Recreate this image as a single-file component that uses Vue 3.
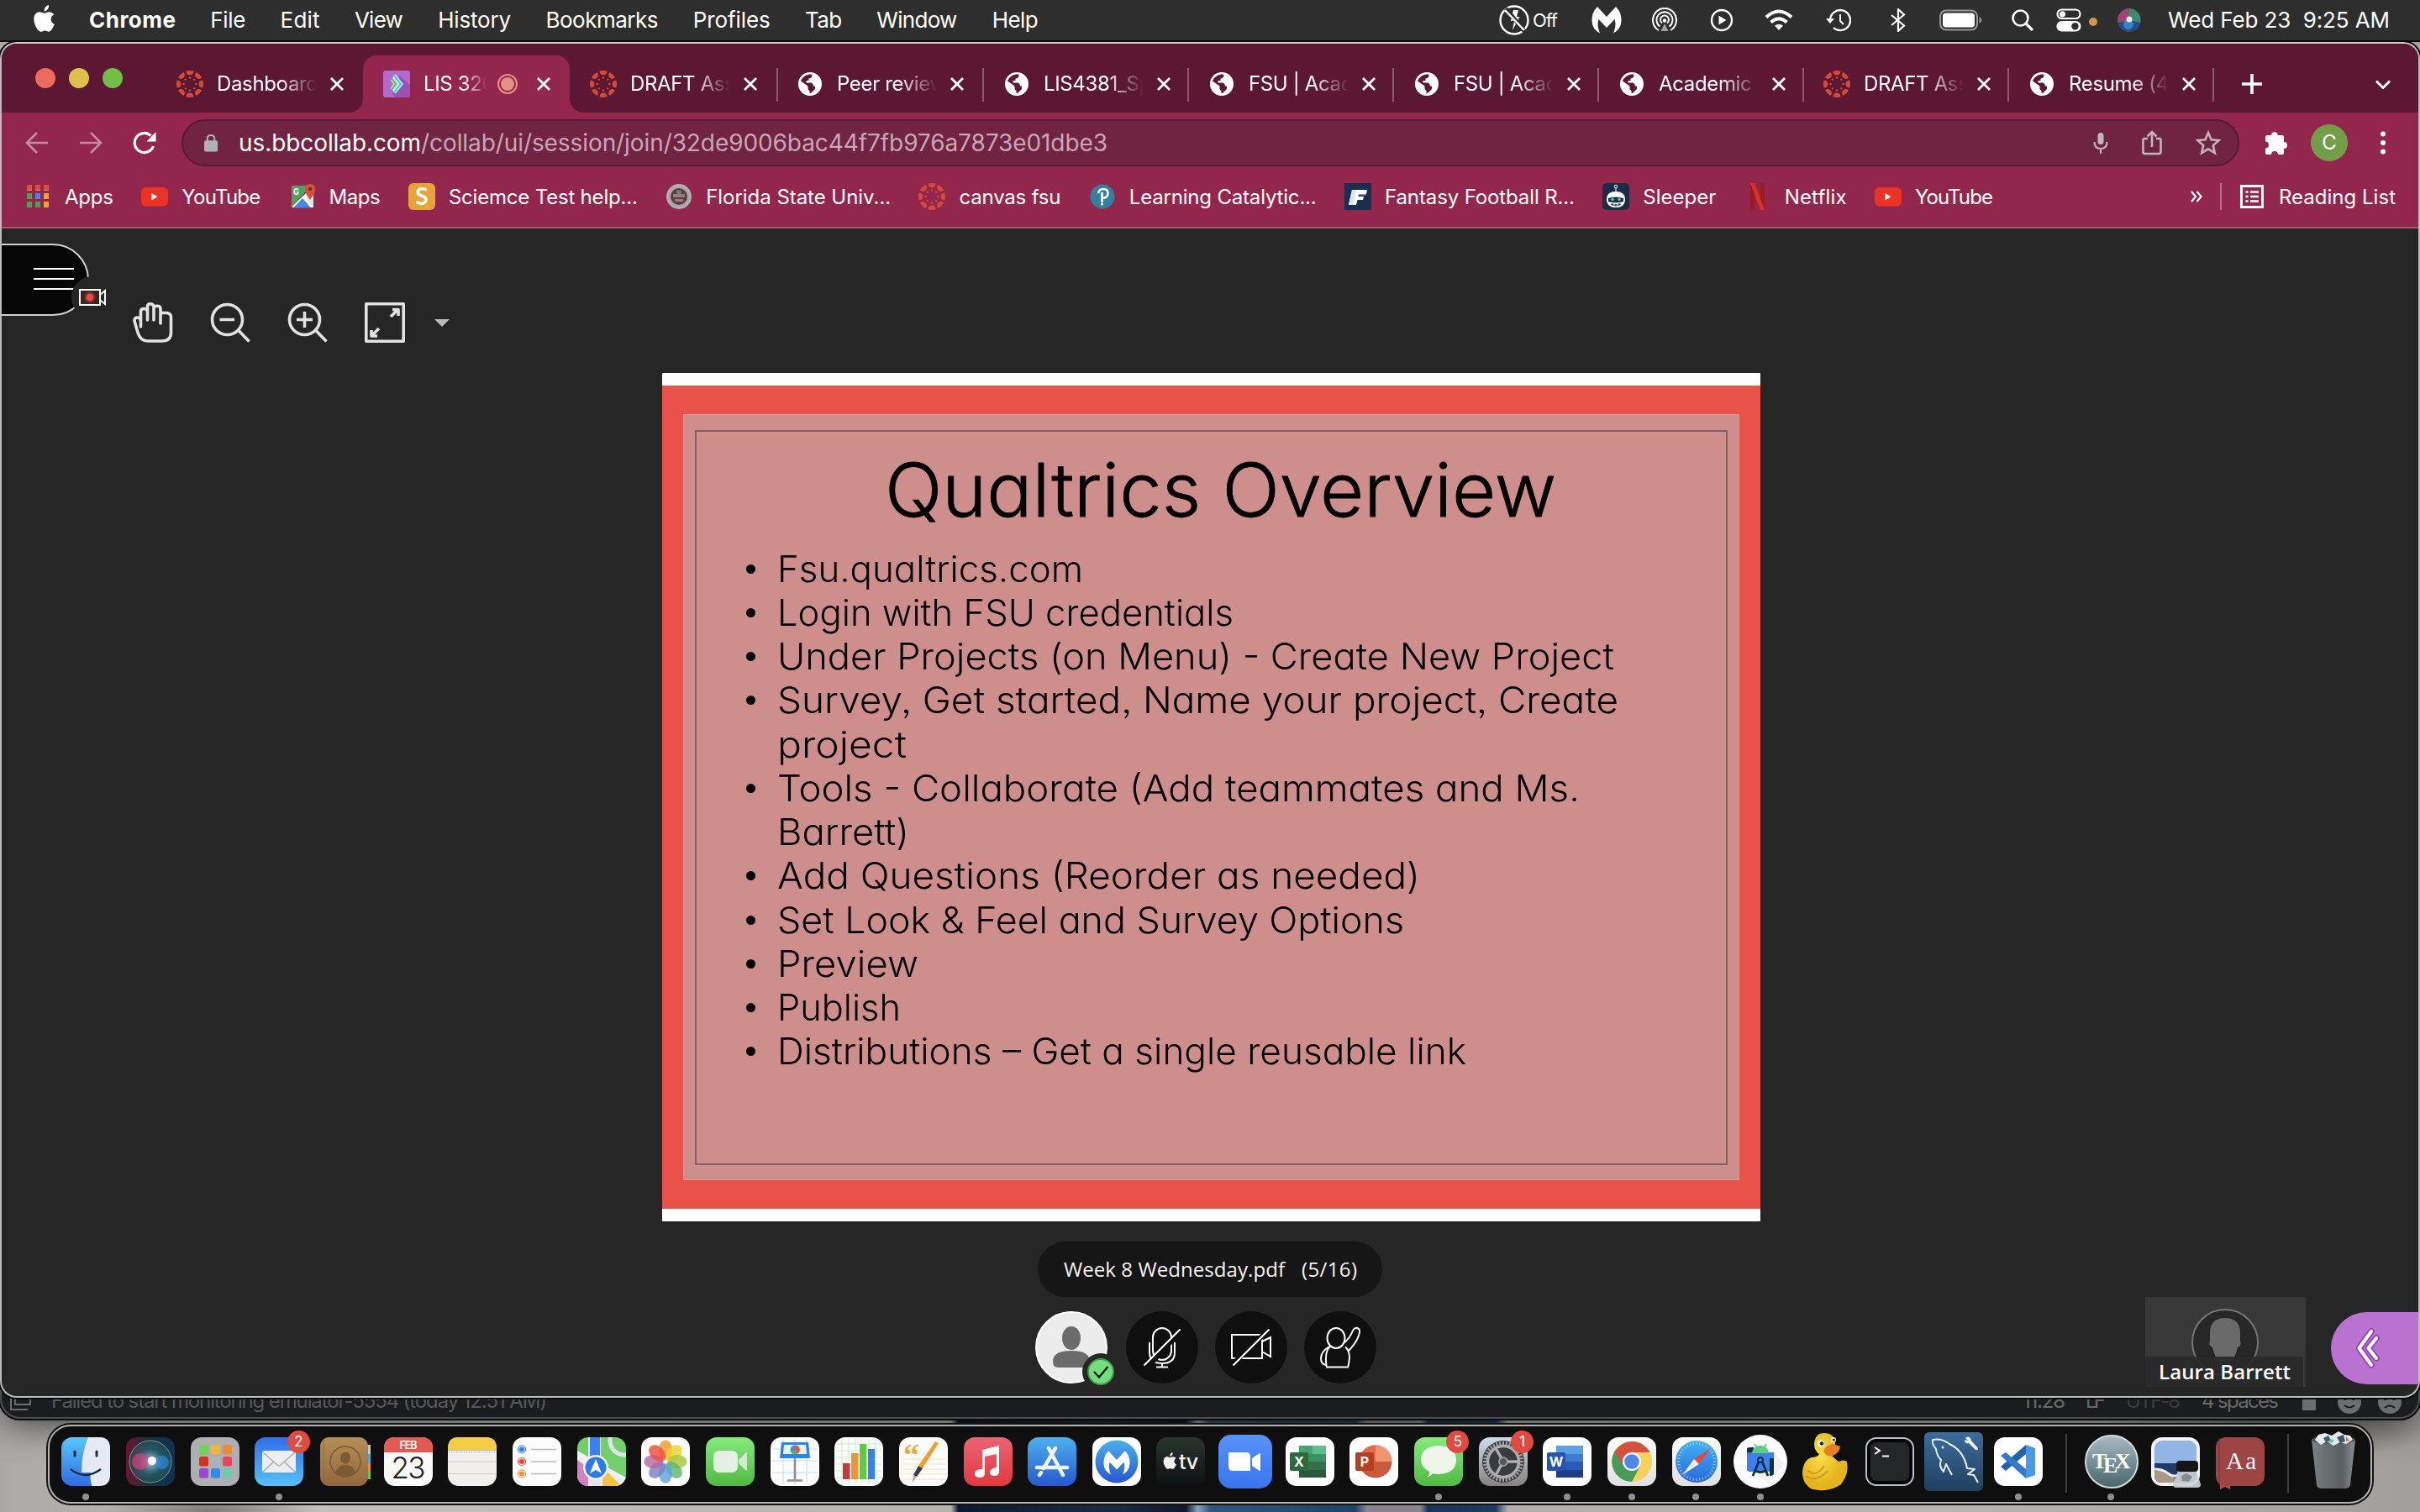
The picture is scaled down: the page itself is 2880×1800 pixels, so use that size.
<script setup>
// Spreads the letters of an element so that its text takes the given width;
// with .stretch the glyphs themselves are widened instead.
const vFit = {
  mounted(el, { value, modifiers }) {
    const count = el.textContent.length
    const natural = el.getBoundingClientRect().width
    if (modifiers.stretch) {
      el.style.transform = `scaleX(${value / natural})`
      return
    }
    const spacing = (value - natural) / Math.max(1, count - 1)
    el.style.letterSpacing = spacing + 'px'
    el.style.marginRight = -spacing + 'px'
  }
}

const menus = [
  ['File', 42], ['Edit', 47], ['View', 58], ['History', 87], ['Bookmarks', 134],
  ['Profiles', 92], ['Tab', 44], ['Window', 96], ['Help', 55]
]

const tabs = [
  { icon: 'canvas', title: 'Dashboard' },
  { icon: 'collab', title: 'LIS 3201', active: true },
  { icon: 'canvas', title: 'DRAFT Assign' },
  { icon: 'globe', title: 'Peer review', line: true, before: true },
  { icon: 'globe', title: 'LIS4381_Sp', line: true },
  { icon: 'globe', title: 'FSU | Acade', line: true },
  { icon: 'globe', title: 'FSU | Acade', line: true },
  { icon: 'globe', title: 'Academic C', line: true },
  { icon: 'canvas', title: 'DRAFT Assign', line: true },
  { icon: 'globe', title: 'Resume (4)', line: true }
]

const bookmarks = [
  ['apps', 'Apps', 58], ['youtube', 'YouTube', 94], ['gmaps', 'Maps', 61],
  ['sci', 'Sciemce Test help...', 225], ['seal', 'Florida State Univ...', 220],
  ['canvas', 'canvas fsu', 121], ['pearson', 'Learning Catalytic...', 223],
  ['ff', 'Fantasy Football R...', 226], ['sleeper', 'Sleeper', 87],
  ['netflix', 'Netflix', 74], ['youtube', 'YouTube', 93]
]

const points = [
  [['Fsu.qualtrics.com', 364]],
  [['Login with FSU credentials', 543]],
  [['Under Projects (on Menu) - Create New Project', 996]],
  [['Survey, Get started, Name your project, Create', 1001], ['project', 154]],
  [['Tools - Collaborate (Add teammates and Ms.', 955], ['Barrett)', 157]],
  [['Add Questions (Reorder as needed)', 765]],
  [['Set Look & Feel and Survey Options', 746]],
  [['Preview', 168]],
  [['Publish', 147]],
  [['Distributions – Get a single reusable link', 820]]
]

const spokes = [0, 45, 90, 135, 180, 225, 270, 315]
const petals = ['#f09a2c', '#ecd32f', '#a8c83e', '#62b56a', '#5ba7dd', '#7d7fc4', '#b767a5', '#e8513f']
const launch = ['#6fd84f', '#f3b52f', '#ee8b32', '#d8301f', '#a9b3b8', '#ea4659', '#9a45d6', '#2b8df0', '#66cfae']
const teeth = Array.from({ length: 36 }, (_, i) => i * 10)
</script>

<template>
  <div class="screen">
    <svg class="defs" width="0" height="0">
      <defs>
        <linearGradient id="gBlue" x2="0" y2="1"><stop stop-color="#2f6fea" /><stop offset="1" stop-color="#57c1f8" /></linearGradient>
        <linearGradient id="gFinder" x2="0" y2="1"><stop stop-color="#59c6f8" /><stop offset="1" stop-color="#2e6ce6" /></linearGradient>
        <linearGradient id="gGreen" x2="0" y2="1"><stop stop-color="#84ea7a" /><stop offset="1" stop-color="#52b944" /></linearGradient>
        <linearGradient id="gStore" x2="0" y2="1"><stop stop-color="#4db0ec" /><stop offset="1" stop-color="#2558d2" /></linearGradient>
        <linearGradient id="gMusic" x2="0" y2="1"><stop stop-color="#ea6475" /><stop offset="1" stop-color="#e5373c" /></linearGradient>
        <linearGradient id="gWhite" x2="0" y2="1"><stop stop-color="#ffffff" /><stop offset="1" stop-color="#dfe0e2" /></linearGradient>
        <linearGradient id="gZoom" x2="0" y2="1"><stop stop-color="#5794f8" /><stop offset="1" stop-color="#3a74ef" /></linearGradient>
        <linearGradient id="gTv" x2="0" y2="1"><stop stop-color="#29352f" /><stop offset="1" stop-color="#0d1113" /></linearGradient>
        <linearGradient id="gBrown" x2="0" y2="1"><stop stop-color="#b38f56" /><stop offset="1" stop-color="#93673f" /></linearGradient>
        <linearGradient id="gTex" x2="0" y2="1"><stop stop-color="#a8bcc2" /><stop offset="1" stop-color="#48656a" /></linearGradient>
        <linearGradient id="gSql" x2="0" y2="1"><stop stop-color="#3c6c9c" /><stop offset="1" stop-color="#20405e" /></linearGradient>
        <linearGradient id="gGear" x2="0" y2="1"><stop stop-color="#cfdde5" /><stop offset="1" stop-color="#85827f" /></linearGradient>
        <linearGradient id="gCan"><stop stop-color="#7b8184" /><stop offset=".3" stop-color="#6a6f72" /><stop offset=".7" stop-color="#5a5f62" /><stop offset="1" stop-color="#8a9093" /></linearGradient>
        <linearGradient id="gSafari" x2="0" y2="1"><stop stop-color="#3fb4f2" /><stop offset="1" stop-color="#2a67dc" /></linearGradient>
        <linearGradient id="gSiriBg"><stop stop-color="#6d1232" /><stop offset=".5" stop-color="#16343a" /><stop offset="1" stop-color="#112f55" /></linearGradient>
        <radialGradient id="gSiri"><stop stop-color="#ffffff" /><stop offset=".2" stop-color="#7ba3b8" /><stop offset=".6" stop-color="#2d6f80" stop-opacity=".6" /><stop offset="1" stop-color="#2f5a58" stop-opacity=".5" /></radialGradient>
        <radialGradient id="gDuck" cx=".4" cy=".4"><stop stop-color="#fbe04a" /><stop offset="1" stop-color="#e5b420" /></radialGradient>
        <symbol id="canvas" viewBox="0 0 32 32">
          <g fill="#d64b36">
            <g v-for="a in spokes" :key="a" :transform="`rotate(${a} 16 16)`">
              <path d="M11.4.8Q16-.8 20.6.8Q20 5.4 16 5.4T11.4.8Z" /><circle cx="16" cy="8.6" r="1.2" />
            </g>
          </g>
        </symbol>
        <symbol id="globe" viewBox="0 0 32 32">
          <circle cx="16" cy="16" r="14" fill="#fff" />
          <path fill="#5c1832" d="M15 4.500h3.500q.4 3-1.500 4.500l-2.500.5v2.500h-3v2.500h6q2.500 1 2.500 4h2v3.500l-3.500 3.500q-1.500 1.500-3 1.500v-3q-2-.5-2-3v-2.500L5 12.500Q7.500 6 15 4.500Z" />
        </symbol>
        <symbol id="collab" viewBox="0 0 32 32">
          <rect width="32" height="32" rx="3" fill="#b36bcb" /><path d="M20 6l12 11v12q0 3-3 3H14l-4-5Z" fill="#9a52b5" />
          <path d="M13 6l8 10L13 26" fill="none" stroke="#fff" stroke-width="4.500" /><path d="M13 6l8 10L13 26" fill="none" stroke="#3bd3f0" stroke-width="2.600" /><path d="M10.500 10l4.500 6-4.500 6.500" fill="none" stroke="#fff" stroke-width="4" /><path d="M10.500 10l4.500 6-4.500 6.500" fill="none" stroke="#58c93c" stroke-width="2.400" />
        </symbol>
        <symbol id="youtube" viewBox="0 0 32 32"><rect y="5" width="32" height="22.500" rx="5.500" fill="#ea3323" /><path d="M12.500 12l7 4.200-7 4.200Z" fill="#fff" /></symbol>
        <symbol id="apps" viewBox="0 0 32 32">
          <g transform="translate(3 2)"><path fill="#e44b3a" d="M0 0h6v6H0zM10 0h6v6h-6zM20 0h6v6h-6z" /><path fill="#b9909c" d="M0 6h6v1H0zM10 6h6v1h-6zM20 6h6v1h-6z" /><path fill="#4ea04e" d="M0 10h6v7H0zM0 20h6v7H0zM10 20h6v7h-6z" /><path fill="#4087f0" d="M10 10h6v7h-6z" /><path fill="#e8a534" d="M20 10h6v7h-6zM20 20h6v7h-6z" /></g>
        </symbol>
        <symbol id="gmaps" viewBox="0 0 32 32">
          <path fill="#4fa35c" d="M5 3h16l-2 8L3 28V5q0-2 2-2Z" /><path fill="#f2c14a" d="M3 28l14-13 5 2L10 29Z" /><path fill="#fff" d="M3 29L21 11l8 10v8Z" /><path fill="#dfe2e6" d="M20 9h9v20l-8-10Z" /><path fill="#4285f4" d="M5 29.500L16 18l10 11.500Z" /><path fill="#d6523f" d="M25 1q6 0 6 6 0 5-3.500 9L25 20l-2.500-4Q19 12 19 7q0-6 6-6Z" /><circle cx="25" cy="7" r="2.300" fill="#7c2b22" /><text x="5" y="14" font-size="10" font-weight="700" fill="#fff" font-family="Roboto,sans-serif">G</text>
        </symbol>
        <symbol id="sci" viewBox="0 0 32 32"><rect width="32" height="32" rx="6" fill="#e8a33a" /><text x="16" y="26" text-anchor="middle" font-size="28" font-weight="700" fill="#fff" font-family="Lato,sans-serif">S</text></symbol>
        <symbol id="seal" viewBox="0 0 32 32"><circle cx="16" cy="16" r="15" fill="#a9a9a9" /><circle cx="16" cy="16" r="13.500" fill="none" stroke="#c9c9c9" stroke-width="1" stroke-dasharray="2 2" /><circle cx="16" cy="16" r="10" fill="#5f3b3f" /><path d="M9 13h14v4H9zM11 19h10v3H11z" fill="#8f817c" /><circle cx="16" cy="11" r="3" fill="#75806c" /></symbol>
        <symbol id="pearson" viewBox="0 0 32 32"><circle cx="16" cy="16" r="14.500" fill="#357f9e" /><path d="M11 12q1-5 6-5 5.500 0 5.500 5t-6 6M15.500 11v12" fill="none" stroke="#fff" stroke-width="2.600" /><circle cx="15.500" cy="25" r="1.500" fill="#fff" /></symbol>
        <symbol id="ff" viewBox="0 0 32 32"><rect width="32" height="32" fill="#192f50" /><path d="M9 8h18l-1 5h-9l-.6 3H23l-1 4h-6.500L14 26H5Z" fill="#fff" /><path d="M9 8h5L10 26H5Z" fill="#dfe2e6" /><path d="M17 13h9l-.5 1.500H17Z" fill="#8793a5" /></symbol>
        <symbol id="sleeper" viewBox="0 0 32 32"><rect width="32" height="32" rx="5" fill="#1c2c45" /><path d="M5 19q0-9 11-9t11 9q0 10-11 10T5 19Z" fill="#fff" /><path d="M7 18q9-3 18 0v4q-9 2.500-18 0Z" fill="#1c2c45" /><circle cx="12" cy="19.500" r="1.700" fill="#3fd5b4" /><circle cx="20" cy="19.500" r="1.700" fill="#3fd5b4" /><path d="M10 25q6 2.500 12 0M12 24v3M16 24.500v3M20 24v3" stroke="#1c2c45" stroke-width="1.200" fill="none" /><path d="M16 10V6" stroke="#fff" /><circle cx="16" cy="4" r="1.800" fill="none" stroke="#fff" /></symbol>
        <symbol id="netflix" viewBox="0 0 32 32"><path fill="#9c1c1c" d="M7 0h5v32H7zM19 0h5v32h-5z" /><path fill="#de3025" d="M7 0h5l12 32h-5z" /></symbol>
        <symbol id="apple" viewBox="0 0 26 32"><path d="M18 0q.5 3-1.300 5.300Q15 7.500 12.700 7.400 12.300 4.600 14 2.500 15.700.4 18 0ZM23.500 25.500Q21 31.500 18.300 31.700 17 31.700 15.600 31 14.200 30.500 13 30.600 12 30.600 10.700 31.200 9.400 31.800 8.500 31.800 5.500 31.500 2.500 25.500 0 20.500.3 16 .7 11 4 9 6.500 7.500 9.500 8.700 12 9.700 13 9.600 14 9.500 16 8.700 21 7 24.300 11.300 20.500 13.500 20.700 17.300 20.900 21.300 25 23Z" /></symbol>
        <symbol id="mwb" viewBox="0 0 36 32"><path d="M7 0L18 12 29 0Q36 7 35.500 17 35 27 26 31.500 30 22 27.500 15L18 25 8.500 15Q6 22 10 31.500 1 27 .5 17 0 7 7 0Z" /></symbol>
      </defs>
    </svg>

    <header class="menubar">
      <svg class="apple" fill="#fff"><use href="#apple" /></svg>
      <nav class="menus">
        <span v-fit="103" class="bold">Chrome</span>
        <span v-for="m in menus" :key="m[0]" v-fit="m[1]">{{ m[0] }}</span>
      </nav>
      <div class="status">
        <svg width="36" height="36" viewBox="0 0 36 36"><circle cx="18" cy="18" r="16.500" fill="none" stroke="#fff" stroke-width="2.400" /><path d="M17 6h6l-2 8h3.500L16 30l2-11h-4Z" fill="#fff" /><path d="M8 4l23 28" stroke="#2e2e2e" stroke-width="5" /><path d="M7 6l23 24" stroke="#fff" stroke-width="2.400" /></svg>
        <span v-fit="30" class="off">Off</span>
        <svg width="36" height="32" fill="#fff"><use href="#mwb" /></svg>
        <svg width="30" height="30" viewBox="0 0 30 30" fill="none" stroke="#fff" stroke-width="2"><path d="M8 27A14 14 0 1 1 22 27M9.500 22.500A9.500 9.500 0 1 1 20.500 22.500M12 18.500A5 5 0 1 1 18 18.500" /><circle cx="15" cy="15.500" r="2.200" fill="#fff" stroke="none" /><path d="M15 19L10.500 28h9Z" fill="#fff" stroke="none" opacity=".55" /></svg>
        <svg width="28" height="28" viewBox="0 0 28 28"><circle cx="14" cy="14" r="12" fill="none" stroke="#fff" stroke-width="2.400" /><path d="M10.500 8.500l9 5.500-9 5.500Z" fill="#fff" /></svg>
        <svg width="34" height="26" viewBox="0 0 34 26" fill="none" stroke="#fff" stroke-width="4"><path d="M2 9.500Q17-4.500 32 9.500M7.500 15.500Q17 7 26.500 15.500" /><path d="M17 25l-5-5.500q5-3.500 10 0Z" fill="#fff" stroke="none" /></svg>
        <svg width="30" height="28" viewBox="0 0 30 28" fill="none" stroke="#fff" stroke-width="2.300"><path d="M5 14A12 12 0 1 1 9 23" /><path d="M17 7v8l4 4" stroke-width="2" /><path d="M0 12h10L5 18Z" fill="#fff" stroke="none" /></svg>
        <svg width="20" height="28" viewBox="0 0 20 28" fill="none" stroke="#fff" stroke-width="2.200"><path d="M2 8l15 12.500L10 27V1l7 6.500L2 20" /></svg>
        <svg width="52" height="26" viewBox="0 0 52 26"><rect x="1" y="1.500" width="44" height="23" rx="7" fill="none" stroke="#969696" stroke-width="2" /><rect x="4" y="4.500" width="38" height="17" rx="4" fill="#fff" /><path d="M47.500 9q3 1.500 3 4t-3 4Z" fill="#969696" /></svg>
        <svg width="26" height="26" viewBox="0 0 26 26" fill="none" stroke="#fff" stroke-width="2.600"><circle cx="10.500" cy="10.500" r="9" /><path d="M17 17l8 8" stroke-width="3.200" /></svg>
        <svg width="30" height="28" viewBox="0 0 30 28"><rect x="1.500" y="1.500" width="27" height="10.500" rx="5.200" fill="none" stroke="#fff" stroke-width="2.200" /><circle cx="7.500" cy="6.800" r="3.600" fill="#fff" /><rect x=".5" y="15" width="29" height="12.500" rx="6.200" fill="#fff" /><circle cx="22.500" cy="21.200" r="4.200" fill="#2e2e2e" /></svg>
        <i class="mic-dot"></i>
        <svg width="30" height="30" viewBox="0 0 30 30"><circle cx="15" cy="15" r="14" fill="#274c8a" /><path d="M15 1a14 14 0 0 1 13 17L15 15Z" fill="#3d8a6d" /><path d="M1.500 18A14 14 0 0 1 15 1v14Z" fill="#a2446d" /><circle cx="14" cy="20" r="6" fill="#3aa0dc" opacity=".7" /><circle cx="15" cy="14" r="3.500" fill="#fff" opacity=".85" /></svg>
        <span class="clock"><span v-fit="264">Wed Feb 23&nbsp; 9:25 AM</span></span>
      </div>
    </header>

    <div class="ide">
      <svg class="ide-icon" width="26" height="26" viewBox="0 0 26 26" fill="none" stroke="#6a6c6e" stroke-width="2"><path d="M6 0v18h18V0M1 4v20h20" /></svg>
      <span v-fit="590" class="ide-msg">Failed to start monitoring emulator-5554 (today 12:51 AM)</span>
      <span v-fit="51">11:28</span>
      <span v-fit="24" class="lf">LF</span>
      <span v-fit="65" class="utf">UTF-8</span>
      <span v-fit="92" class="spaces">4 spaces</span>
      <i class="lock-box"></i>
      <svg class="face" viewBox="0 0 28 28"><circle cx="14" cy="14" r="14" fill="#6b6d6e" /><path d="M8 18q6 5 12 0" fill="none" stroke="#1b1c1e" stroke-width="2" /><path d="M9 7v5M19 7v5" stroke="#1b1c1e" stroke-width="3" /></svg>
      <svg class="face" viewBox="0 0 28 28"><circle cx="14" cy="14" r="14" fill="#6b6d6e" /><path d="M8 21q6-5 12 0" fill="none" stroke="#1b1c1e" stroke-width="2" /><path d="M9 7v5M19 7v5" stroke="#1b1c1e" stroke-width="3" /></svg>
    </div>

    <main class="window">
      <div class="tabstrip">
        <div class="lights"><i class="red"></i><i class="yellow"></i><i class="green"></i></div>
        <div class="tabs">
          <div v-for="(t, i) in tabs" :key="i" class="tab" :class="{ active: t.active, line: t.line, before: t.before, wide: i < 4 }">
            <svg class="fav"><use :href="'#' + t.icon" /></svg>
            <span class="title">{{ t.title }}</span>
            <i v-if="t.active" class="rec"></i>
            <svg class="close" viewBox="0 0 16 16"><path d="M1 1l14 14M15 1L1 15" stroke="#fff" stroke-width="2.800" /></svg>
          </div>
        </div>
        <svg class="plus" viewBox="0 0 24 24"><path d="M12 0v24M0 12h24" stroke="#fff" stroke-width="3.600" /></svg>
        <svg class="chev" viewBox="0 0 18 12"><path d="M1 1.500l8 8 8-8" fill="none" stroke="#fff" stroke-width="2.800" /></svg>
      </div>

      <div class="toolbar">
        <svg class="nav" viewBox="0 0 28 28" fill="none" stroke="#c68ba3" stroke-width="2.600"><path d="M27 14H2M14 2L2 14l12 12" /></svg>
        <svg class="nav" viewBox="0 0 28 28" fill="none" stroke="#c68ba3" stroke-width="2.600"><path d="M1 14h25M14 2l12 12-12 12" /></svg>
        <svg class="nav" viewBox="0 0 28 28" fill="none" stroke="#fff" stroke-width="3.200"><path d="M24.500 18A11.500 11.500 0 1 1 21.500 5.500" /><path d="M27.500 1v11.500H16.500Z" fill="#fff" stroke="none" /></svg>
        <div class="omnibox">
          <svg class="lock" viewBox="0 0 18 22"><rect y="8" width="17" height="14" rx="2" fill="#b1b1b8" /><path d="M4 9V6q0-4.500 4.500-4.500T13 6v3" fill="none" stroke="#b1b1b8" stroke-width="2.200" /></svg>
          <span v-fit="1034" class="url"><b>us.bbcollab.com</b>/collab/ui/session/join/32de9006bac44f7fb976a7873e01dbe3</span>
          <svg width="18" height="27" viewBox="0 0 18 27" fill="none" stroke="#c0b6b9" stroke-width="2.200"><rect x="5.500" y="1" width="7" height="14" rx="3.500" fill="#c0b6b9" stroke="none" /><path d="M1.500 12q0 8 7.500 8t7.500-8M9 20v6" /></svg>
          <svg width="24" height="30" viewBox="0 0 24 30" fill="none" stroke="#c0b6b9" stroke-width="2.600"><path d="M7 10H3Q1.500 10 1.500 12v14q0 2 2 2h17q2 0 2-2V12q0-2-1.500-2h-4M12 20V2M6.500 7.500L12 2l5.500 5.500" /></svg>
          <svg width="30" height="30" viewBox="0 0 30 30" fill="none" stroke="#c0b6b9" stroke-width="2.600"><path d="M15 3l3.600 8.300 9 .8-6.800 6 2 8.900-7.800-4.700L7.200 27l2-8.900-6.800-6 9-.8Z" /></svg>
        </div>
        <svg class="puzzle" viewBox="0 0 28 28" fill="#fff"><path d="M8 5a3.800 3.800 0 0 1 7.600 0H21q2 0 2 2v6a3.800 3.800 0 0 1 0 8v5q0 2-2 2h-5a4 4 0 0 0-8 0H3q-2 0-2-2v-5.500a4 4 0 0 0 0-8V7q0-2 2-2Z" /></svg>
        <span class="avatar">C</span>
        <svg class="dots" viewBox="0 0 6 28" fill="#fff"><circle cx="3" cy="3.500" r="3" /><circle cx="3" cy="14" r="3" /><circle cx="3" cy="24.500" r="3" /></svg>
      </div>

      <div class="bookmarks">
        <div v-for="(b, i) in bookmarks" :key="i" class="bm">
          <svg class="fav"><use :href="'#' + b[0]" /></svg>
          <span v-fit="b[2]">{{ b[1] }}</span>
        </div>
        <svg class="more" viewBox="0 0 14 14" fill="none" stroke="#fff" stroke-width="2.200"><path d="M1 1l5 6-5 6M7.500 1l5 6-5 6" /></svg>
        <i class="bm-line"></i>
        <svg class="reading" viewBox="0 0 28 28"><rect x="1.500" y="1.500" width="25" height="25" fill="none" stroke="#fff" stroke-width="3" /><path d="M6.500 8.500h3M6.500 14h3M6.500 19.500h3M12 8.500h10M12 14h10M12 19.500h10" stroke="#fff" stroke-width="2.600" /></svg>
        <span v-fit="139">Reading List</span>
      </div>

      <section class="session">
        <div class="session-menu"><i></i><i></i><i></i></div>
        <div class="recording">
          <svg width="32" height="20" viewBox="0 0 32 20"><rect x="1" y="1" width="24" height="18" fill="#3a2523" stroke="#fff" stroke-width="2" /><circle cx="13" cy="10" r="6.500" fill="#b53a31" opacity=".6" /><circle cx="13" cy="10" r="4.200" fill="#ee4f42" /><path d="M25 7l6-5v16l-6-5" fill="none" stroke="#fff" stroke-width="2" /></svg>
        </div>

        <div class="tools">
          <svg viewBox="0 0 48 48"><path d="M9.500 29V11q0-3.500 3.800-3.500T17.500 11v10V5q0-3.200 3.500-3.200T25 5v16V7.500q0-3.200 4-3.200t4 3.200V25V15.500q0-3 2-3h6q4.500 1 4.500 5V36q0 10-11 10H18Q9 46 6 36L2 22q0-4 3.500-4T9.500 22Z" /></svg>
          <svg viewBox="0 0 48 48"><circle cx="20.500" cy="20.500" r="18" /><path d="M34 33.500L46.500 46.500M11.500 20.500h17.500" /></svg>
          <svg viewBox="0 0 48 48"><circle cx="20.500" cy="20.500" r="18" /><path d="M34 33.500L46.500 46.500M11 20.500h19M20.500 11v19" /></svg>
          <svg viewBox="0 0 48 48"><rect x="1.800" y="1.800" width="44.400" height="44.400" /><path d="M31 17l9-9M33 8.500h7V16M17 31l-9 9M8 33v7h7" /></svg>
          <i class="caret"></i>
        </div>

        <article class="slide">
          <div class="frame">
            <div class="paper">
              <h1><span v-fit.stretch="799">Qualtrics Overview</span></h1>
              <ul>
                <li v-for="(p, i) in points" :key="i">
                  <div v-for="l in p" :key="l[0]" class="row"><span v-fit.stretch="l[1]">{{ l[0] }}</span></div>
                </li>
              </ul>
            </div>
          </div>
        </article>

        <div class="pill"><span v-fit="263">Week 8 Wednesday.pdf</span><span v-fit="66">(5/16)</span></div>

        <div class="controls">
          <div class="me">
            <svg viewBox="0 0 86 86"><circle cx="43" cy="43" r="42" fill="#ececec" stroke="#fff" stroke-width="2" /><ellipse cx="43" cy="32" rx="11" ry="14" fill="#6b6b6b" /><path d="M21 60q0-13 22-13t22 13q0 7-6 7H27q-6 0-6-7Z" fill="#6b6b6b" /><circle cx="78" cy="72" r="22" fill="#262626" /><circle cx="78" cy="72" r="15" fill="#73de80" stroke="#3f9c48" stroke-width="2" /><path d="M70 72l6 6.500L86.500 66" fill="none" stroke="#111" stroke-width="2.200" /></svg>
          </div>
          <svg viewBox="0 0 86 86"><circle cx="43" cy="43" r="43" fill="#0f0f0f" /><g fill="none" stroke="#fff" stroke-width="2"><rect x="32" y="20" width="22" height="38" rx="11" /><path d="M28 37v12q0 13 15 13t15-13V37M43 62v4M36 66.500h14" /><path d="M30 62L66 22" stroke="#0f0f0f" stroke-width="6" /><path d="M21.500 64.500L64.500 21.500" stroke-width="2.200" /></g></svg>
          <svg viewBox="0 0 86 86"><circle cx="43" cy="43" r="43" fill="#0f0f0f" /><g fill="none" stroke="#fff" stroke-width="2"><path d="M20 28h36v28H20ZM56 36l10-5v23l-10-6" /><path d="M24 60L64 22" stroke="#0f0f0f" stroke-width="6" /><path d="M21.500 64.500L64.500 21.500" stroke-width="2.200" /></g></svg>
          <svg viewBox="0 0 86 86"><circle cx="43" cy="43" r="43" fill="#0f0f0f" /><g fill="none" stroke="#fff" stroke-width="2"><ellipse cx="38" cy="32" rx="10.500" ry="12" /><path d="M47 38q7-5 11-15 3-5 7-2 2 2 0 8-3 9-13 19M31 42q-5 4-5 14 0 8 1 10.500h25q1-2 2-11 0-9-5-13M30 42q-10 6-10 14 0 7 6 8" /></g></svg>
        </div>

        <div class="person">
          <svg viewBox="0 0 191 107"><circle cx="95" cy="54" r="39" fill="#272727" stroke="#757575" stroke-width="2" /><path d="M95 25q18 0 18 18v9q2 6-3 8-3 12-8 17H88q-5-5-8-17-5-2-3-8v-9q0-18 18-18Z" fill="#6a6a6a" /></svg>
          <div class="name"><span v-fit="157">Laura Barrett</span></div>
        </div>
        <div class="panel-btn">
          <svg viewBox="0 0 30 50" fill="none" stroke-linecap="round" stroke-linejoin="round"><g stroke="#943eb0" stroke-width="7.500"><path d="M19 5L4.500 25 19 45M25 13l-9.500 12L25 37" /></g><g stroke="#fff" stroke-width="4.200"><path d="M19 5L4.500 25 19 45M25 13l-9.500 12L25 37" /></g></svg>
        </div>
      </section>
    </main>

    <footer class="dock">
      <div class="slot run"><svg viewBox="0 0 58 58"><rect width="58" height="58" rx="13" fill="url(#gFinder)" /><path d="M32 0h13q13 0 13 13v32q0 13-13 13h-9q-2-9-1.500-16H24Q24 18 32 0Z" fill="#e6ebf3" /><path d="M16 17v5M42 17v5" stroke="#222c3a" stroke-width="3" stroke-linecap="round" /><path d="M11 38q17 14 36 0" fill="none" stroke="#182536" stroke-width="2.200" /></svg></div>
      <div class="slot"><svg viewBox="0 0 58 58"><rect width="58" height="58" rx="13" fill="url(#gSiriBg)" /><circle cx="29" cy="29" r="25" fill="url(#gSiri)" stroke="#62a897" stroke-width="1" /><circle cx="17" cy="29" r="10" fill="#e04080" opacity=".65" /><circle cx="43" cy="30" r="8" fill="#2e8de0" opacity=".65" /><circle cx="31" cy="28" r="5" fill="#fff" /></svg></div>
      <div class="slot"><svg viewBox="0 0 58 58"><rect width="58" height="58" rx="13" fill="#aeafb2" /><rect v-for="(c, i) in launch" :key="i" :x="10 + (i % 3) * 14" :y="9 + Math.floor(i / 3) * 14" width="11" height="11.500" rx="2.500" :fill="c" /></svg></div>
      <div class="slot run"><svg viewBox="0 0 58 58"><rect width="58" height="58" rx="13" fill="url(#gBlue)" /><rect x="9" y="16" width="40" height="26" rx="3" fill="#eeeeee" /><path d="M10 18l17 15q2 1.500 4 0l17-15M10 41l13-12M48 41L35 29" fill="none" stroke="#a9a9a9" stroke-width="1.400" /></svg><b class="badge">2</b></div>
      <div class="slot"><svg viewBox="0 0 58 58"><path d="M56 9h5v12h-5z" fill="#c7c7c7" /><path d="M56 20h5v11h-5z" fill="#4fa9e0" /><path d="M56 31h5v10h-5z" fill="#e88f38" /><path d="M56 41h5v9h-5z" fill="#62c35a" /><rect x="1" width="57" height="58" rx="11" fill="url(#gBrown)" /><path d="M5 1v56" stroke="#7d5c34" opacity=".5" /><circle cx="31" cy="29" r="18" fill="none" stroke="#7c5b33" stroke-width="1.500" /><ellipse cx="31" cy="24.500" rx="6" ry="7" fill="#7c5b33" /><path d="M19 42q3-9 12-9t12 9q-5 5-12 5t-12-5Z" fill="#7c5b33" /></svg></div>
      <div class="slot"><svg viewBox="0 0 58 58"><rect width="58" height="58" rx="13" fill="#fafafa" /><path d="M0 18v-5Q0 0 13 0h32q13 0 13 13v5Z" fill="#e35a52" /><text x="29" y="14" text-anchor="middle" font-size="12.500" font-weight="600" fill="#fff" textLength="21">FEB</text><text x="29" y="49" text-anchor="middle" font-size="35" font-weight="300" fill="#222" textLength="41">23</text></svg></div>
      <div class="slot"><svg viewBox="0 0 58 58"><rect width="58" height="58" rx="13" fill="#f1efeb" /><path d="M0 15v-2Q0 0 13 0h32q13 0 13 13v2Z" fill="#f7cc45" /><path d="M0 15.500h58" stroke="#c8bfae" stroke-width="1.500" /><path d="M1 18h56" stroke="#aaa" stroke-dasharray="1 2" /><path d="M0 29h58M0 43.500h58" stroke="#cfcdc9" /></svg></div>
      <div class="slot"><svg viewBox="0 0 58 58"><rect width="58" height="58" rx="13" fill="#fcfcfc" /><g fill="none" stroke-width="1.200"><circle cx="11" cy="14.500" r="4.500" stroke="#2d7cf0" /><circle cx="11" cy="29" r="4.500" stroke="#e2463c" /><circle cx="11" cy="43.500" r="4.500" stroke="#ea9433" /></g><circle cx="11" cy="14.500" r="3" fill="#2d7cf0" /><circle cx="11" cy="29" r="3" fill="#e2463c" /><circle cx="11" cy="43.500" r="3" fill="#ea9433" /><path d="M22 14.500h30M22 29h30M22 43.500h30" stroke="#bbb" stroke-width="1.300" /></svg></div>
      <div class="slot"><svg viewBox="0 0 58 58" class="clip"><rect width="58" height="58" fill="#72cf6b" /><path d="M0 16L58 48V58H0Z" fill="#f0f0f2" /><path d="M0 27l14 10v21H0Z" fill="#d580c0" /><path d="M30 35l22 23H30Z" fill="#f3c440" /><path d="M13 0h15v58H13Z" fill="#e4e4ea" /><path d="M15 0h12v28H15Z" fill="#3a82f2" /><circle cx="56" cy="4" r="17" fill="none" stroke="#dfe4e8" stroke-width="5" /><circle cx="22" cy="36" r="15" fill="#f2f4f8" /><circle cx="22" cy="36" r="12.500" fill="#2f7be6" /><path d="M22 26l7 17-7-4-7 4Z" fill="#fff" /></svg></div>
      <div class="slot"><svg viewBox="0 0 58 58"><rect width="58" height="58" rx="13" fill="#fcfcfc" /><ellipse v-for="(c, i) in petals" :key="c" cx="29" cy="15" rx="8" ry="11.500" :fill="c" opacity=".82" :transform="`rotate(${i * 45} 29 29)`" /></svg></div>
      <div class="slot"><svg viewBox="0 0 58 58"><rect width="58" height="58" rx="13" fill="url(#gGreen)" /><rect x="9" y="16" width="29" height="26" rx="6.500" fill="#e5efe5" /><path d="M39 27l8-8q2-2 2 1v18q0 3-2 1l-8-8Z" fill="#d2ecd0" /></svg></div>
      <div class="slot"><svg viewBox="0 0 58 58"><rect width="58" height="58" rx="13" fill="#fcfcfc" /><path d="M2 14h54M2 28h54M2 42h54M15 2v54M29 2v54M43 2v54" stroke="#c3dcf1" /><path d="M13 6h32l2 19H11Z" fill="#2d83e6" /><path d="M16 9h26l1 11H15Z" fill="#e8f2fc" /><path d="M29 25v26M20 51.500h18" stroke="#8c8f94" stroke-width="2.600" /><circle cx="29" cy="15" r="5.500" fill="#4cb96a" /><path d="M29 15V9.500A5.500 5.500 0 0 1 33 19Z" fill="#e9563f" /><path d="M29 15V9.500A5.500 5.500 0 0 0 24 17Z" fill="#3e8ee8" /></svg></div>
      <div class="slot"><svg viewBox="0 0 58 58"><rect width="58" height="58" rx="13" fill="#fcfcfc" /><path d="M2 8h54M2 16h54M2 24h54M2 32h54M2 40h54M2 48h54M9 2v54M17 2v54M25 2v54M33 2v54M41 2v54M49 2v54" stroke="#c9ecc6" /><path d="M10 31h8.500v19H10z" fill="#c43a44" /><path d="M20 19h8.500v31H20z" fill="#ea9538" /><path d="M30 8h8v42h-8z" fill="#5fcb3f" /><path d="M40 14h8v36h-8z" fill="#3a80ec" /></svg></div>
      <div class="slot"><svg viewBox="0 0 58 58"><rect width="58" height="58" rx="13" fill="#fcfcfc" /><path d="M2 26h54M2 32h54M2 38h54M2 44h54M2 50h54" stroke="#f7dfc2" /><text x="5" y="34" font-size="38" font-weight="700" fill="#f0a83c" class="serif">“</text><path d="M43 5l4 2L28 37l-5-3Z" fill="#f0a02e" /><path d="M23 34l5 3-7 10-4-2Z" fill="#3b3b3f" /><path d="M17 45l4 2-5 7Z" fill="#aaa" /></svg></div>
      <div class="slot"><svg viewBox="0 0 58 58"><rect width="58" height="58" rx="13" fill="url(#gMusic)" /><path d="M22 15l20-5v31q0 5-5.500 5T31 42q0-5 8-6V20l-14 3v20q0 5-6 5t-6-4.500Q13 38 22 38Z" fill="#fff" /></svg></div>
      <div class="slot"><svg viewBox="0 0 58 58"><rect width="58" height="58" rx="13" fill="url(#gStore)" /><g stroke="#eef5fd" stroke-width="4.500" stroke-linecap="round"><path d="M25 13l17 32M33 13L19 37M11 36h24M41 36h6M16 42l-2 3" /></g></svg></div>
      <div class="slot"><svg viewBox="0 0 58 58"><rect width="58" height="58" rx="13" fill="#fff" /><circle cx="29" cy="29" r="25.500" fill="url(#gStore)" /><svg x="13" y="16" width="32" height="29" fill="#fff"><use href="#mwb" /></svg></svg></div>
      <div class="slot"><svg viewBox="0 0 58 58"><rect width="58" height="58" rx="13" fill="url(#gTv)" /><svg x="8" y="18" width="17" height="20" fill="#f2f2f2"><use href="#apple" /></svg><text x="27" y="38" font-size="25" font-weight="500" fill="#f2f2f2" textLength="23">tv</text></svg></div>
      <div class="slot"><svg class="big" viewBox="0 0 64 64"><rect width="64" height="64" rx="15" fill="url(#gZoom)" /><path d="M12 21h21q5 0 5 5v17H17q-5 0-5-5Z" fill="#fff" /><path d="M40 28l9-6q1 0 1 1v19q0 1-1 1l-9-6Z" fill="#fff" /></svg></div>
      <div class="slot"><svg viewBox="0 0 58 58"><rect width="58" height="58" rx="13" fill="#fff" /><path d="M16 10h32v38H16Z" fill="#379462" /><path d="M32 10h16v10H32Z" fill="#5cc088" /><path d="M16 10h16v10H16Z" fill="#4ba270" /><path d="M32 29h16v10H32ZM16 29h16v10H16Z" fill="#33724a" /><path d="M16 39h32v9H16Z" fill="#2a5a3c" /><rect x="5" y="18" width="22" height="22" rx="2" fill="#2c6b40" /><text x="16" y="35" text-anchor="middle" font-size="16" font-weight="700" fill="#fff">X</text></svg></div>
      <div class="slot"><svg viewBox="0 0 58 58"><rect width="58" height="58" rx="13" fill="#fff" /><circle cx="31" cy="29" r="19.500" fill="#c95a3c" /><path d="M31 29V9.500A19.500 19.500 0 0 1 50.500 29Z" fill="#f19473" /><path d="M31 29V9.500A19.500 19.500 0 0 0 11.500 29Z" fill="#e06c4a" /><rect x="7" y="18" width="22" height="22" rx="2" fill="#b53f22" /><text x="18" y="35" text-anchor="middle" font-size="16" font-weight="700" fill="#fff">P</text></svg></div>
      <div class="slot run"><svg viewBox="0 0 58 58"><rect width="58" height="58" rx="13" fill="url(#gGreen)" /><path d="M29 10q21 1 21 17T29 44q-4 0-7-1-2 4-7 4 4-2 3-6Q8 36 8 27q0-16 21-17Z" fill="#eef6ec" /></svg><b class="badge">5</b></div>
      <div class="slot"><svg viewBox="0 0 58 58"><rect width="58" height="58" rx="13" fill="url(#gGear)" /><circle cx="29" cy="29" r="25" fill="#3a3b3d" /><path v-for="a in teeth" :key="a" d="M29 5v4" stroke="#a2a5a8" stroke-width="2" :transform="`rotate(${a} 29 29)`" /><circle cx="29" cy="29" r="18.500" fill="none" stroke="#aaadb0" stroke-width="3.500" /><path d="M29 29h18M29 29L20 13M29 29L20 45" stroke="#aaadb0" stroke-width="3.500" /><circle cx="29" cy="29" r="5" fill="#55575a" stroke="#aaadb0" stroke-width="1.500" /></svg><b class="badge">1</b></div>
      <div class="slot run"><svg viewBox="0 0 58 58"><rect width="58" height="58" rx="13" fill="#fff" /><path d="M16 10h32v10H16Z" fill="#5aa2e6" /><path d="M16 20h32v9H16Z" fill="#3f7bd0" /><path d="M16 29h32v10H16Z" fill="#2a5bb6" /><path d="M16 39h32v9H16Z" fill="#1d3f86" /><rect x="5" y="18" width="22" height="22" rx="2" fill="#2553ae" /><text x="16" y="35" text-anchor="middle" font-size="16" font-weight="700" fill="#fff" textLength="15">W</text></svg></div>
      <div class="slot run"><svg viewBox="0 0 58 58"><rect width="58" height="58" rx="13" fill="url(#gWhite)" /><circle cx="29" cy="29" r="24" fill="#fad05b" /><path d="M29 29L8.500 17A24 24 0 0 0 29 53L39 34Z" fill="#489a5b" /><path d="M29 18H50.500A24 24 0 0 0 8.500 17L19 34Z" fill="#d5503f" /><circle cx="29" cy="29" r="11" fill="#fff" /><circle cx="29" cy="29" r="8.800" fill="#4f86ea" /></svg></div>
      <div class="slot run"><svg viewBox="0 0 58 58"><rect width="58" height="58" rx="13" fill="url(#gWhite)" /><circle cx="29" cy="29" r="25" fill="url(#gSafari)" /><path v-for="a in teeth" :key="a" d="M29 6v3" stroke="#d5e9fb" stroke-width=".8" :transform="`rotate(${a} 29 29)`" /><path d="M46 13L26 26l6 6Z" fill="#e8483b" /><path d="M12 45l14-19 6 6Z" fill="#f0f0f0" /></svg></div>
      <div class="slot run"><svg class="big" viewBox="0 0 64 64"><circle cx="32" cy="32" r="32" fill="#fcfcfc" /><path d="M40 14l20 20-18 24-12-8Z" fill="#f1f1f1" /><path d="M16 17q0-2 4-2h4v6h-8Z" fill="#0d3040" /><path d="M16 21h32v8h-4v12q0 3-3 3H19q-3 0-3-3Z" fill="#3e80f0" /><path d="M43 28h5v18q0 3-5 3Z" fill="#0d3040" /><path d="M22 22q1-9 10-9t10 9Z" fill="#5fcc85" /><path d="M25 11l3 4M39 11l-3 4" stroke="#5fcc85" stroke-width="1.500" /><path d="M30 32l-7 17M34 32l7 17M26 43q6 3 12 0" stroke="#0d3040" stroke-width="2.800" fill="none" /><circle cx="32" cy="30" r="3" fill="#3e80f0" stroke="#0d3040" stroke-width="2" /></svg></div>
      <div class="slot"><svg class="huge" viewBox="0 0 70 70"><path d="M22 14Q23 1 34 1q12 0 13 12 1 8-5 14 5 5 9 8 6-3 10 0 3 14-7 27-14 10-34 6Q8 62 8 48q1-15 11-18 7 0 9-4-6-4-6-12Z" fill="url(#gDuck)" /><path d="M14 45q10 10 20-5M12 52q12 9 26-6" fill="none" stroke="#cf9a1d" stroke-width="2" /><path d="M33 23q3-9 12-9l8 3q-1 8-9 11-7 2-11-5Z" fill="#e77f25" /><circle cx="30" cy="13.500" r="4" fill="#fff" /><circle cx="31" cy="13.500" r="2.200" fill="#222" /><circle cx="45" cy="9" r="3" fill="#fff" /><circle cx="45.500" cy="9" r="1.600" fill="#222" /></svg></div>
      <div class="slot"><svg viewBox="0 0 58 58"><rect x="1" y="1" width="56" height="56" rx="12" fill="#050505" stroke="#b8c0c6" stroke-width="2" /><rect x="6" y="6" width="46" height="46" rx="7" fill="#252627" /><path d="M11 12l6 4-6 4" fill="none" stroke="#fff" stroke-width="2" /><path d="M20 22.500h8" stroke="#fff" stroke-width="2" /></svg></div>
      <div class="slot"><svg class="huge" viewBox="0 0 70 70"><rect width="70" height="70" rx="6" fill="url(#gSql)" /><path d="M64 60l-5-9-7-1 8-6-9-1Q47 22 30 14 21 7 10 9q-1 5 4 11 1 8 6 13-3 8 3 14l3-9 7 13" fill="none" stroke="#e9f1f8" stroke-width="2" stroke-linejoin="round" /><circle cx="22" cy="18" r="1.500" fill="#fff" /><path d="M49 7q5-4 7 3l8 9q0 3-3 2l-8-8q-5 1-5-4l4 1Z" fill="#e9f1f8" /></svg></div>
      <div class="slot run"><svg viewBox="0 0 58 58"><rect width="58" height="58" rx="13" fill="#fff" /><path d="M38 9v11L14 40l-6-5Z" fill="#2563a8" /><path d="M8 22l6-4 24 20v11Z" fill="#3478c8" /><path d="M38 9l11 4v32l-11 4Z" fill="#489ae8" /></svg></div>
      <i class="rule"></i>
      <div class="slot run"><svg class="big" viewBox="0 0 64 64"><circle cx="32" cy="32" r="31" fill="url(#gTex)" stroke="#d5dadb" stroke-width="2" /><g class="serif" font-size="26" font-weight="700" fill="#fff"><text x="9" y="40" textLength="17">T</text><text x="22" y="45" textLength="17">E</text><text x="36" y="40" textLength="19">X</text></g></svg></div>
      <div class="slot"><svg viewBox="0 0 58 58"><rect width="58" height="58" rx="13" fill="#f3f3f3" /><rect x="4" y="4" width="50" height="50" rx="9" fill="#92b5e6" /><path d="M4 31h50v14q0 9-9 9H13q-9 0-9-9Z" fill="#1f3866" /><path d="M4 40q14-2 22 6l4 8H13q-9 0-9-9Z" fill="#a99884" /><path d="M4 38q10 0 16 5t12 2" stroke="#e4edf3" stroke-width="3" fill="none" /><path d="M32 40h22l5 16q0 4-4 4H30q-4 0-4-4Z" fill="#cfd3d5" opacity=".92" /><path d="M36 46l6-3 7 4-4 6-8-1Z" fill="#858d92" /><rect x="30" y="28" width="26" height="13" rx="4" fill="#151515" /></svg></div>
      <div class="slot"><svg viewBox="0 0 58 58"><path d="M5 54h12v8l-6-3-6 3Z" fill="#d04438" /><rect width="58" height="58" rx="12" fill="#9d4544" /><path d="M4 1v56" stroke="#7f3332" /><text x="30" y="38" text-anchor="middle" font-size="29" fill="#fff" class="serif" textLength="36">Aa</text></svg></div>
      <i class="rule"></i>
      <div class="slot"><svg class="big" viewBox="0 0 64 64"><path d="M6 6l52 0-6 54q-1 4-6 4H18q-5 0-6-4Z" fill="url(#gCan)" /><ellipse cx="32" cy="6" rx="26" ry="5" fill="#4c5052" /><path d="M10 6l4-6 8-2 8 3 8-5 7 4 7 1 3 5-8 5-7-2-8 4-8-5-7 4Z" fill="#e7e9ea" /><path d="M20 4l6-3 3 6-6 2ZM36 3l8-3 2 8-6 2Z" fill="#3a5b74" /><path d="M28 5l5 1-3 4-4-1Z" fill="#6cc5a0" /><path d="M47 2l4 5-4 1Z" fill="#b97a51" /></svg></div>
    </footer>
  </div>
</template>

<style>
body { overflow: hidden; background: #000; }
</style>

<style scoped>
.screen {
  position: relative; width: 2880px; height: 1800px; overflow: hidden;
  font-family: Inter, "Liberation Sans", sans-serif; color: #fff;
  background:
    radial-gradient(ellipse 130px 30px at 250px 1800px, #7d7a78, transparent),
    radial-gradient(ellipse 200px 40px at 2700px 1700px, #6f6b69, transparent),
    linear-gradient(90deg, #aba8a6 0, #c4c0bd 12%, #b7b3af 39.300%, #0e1a2c 39.600%, #1d2a42 46%, #101827 49%, #8aa3bb 49.500%, #31567e 50%, #1f4367 56%, #8b8490 56.500%, #8b8490 58.700%, #18365a 59%, #1b3b60 61.800%, #b3aeac 62.300%, #b9b5b2 80%, #a29e9b 100%);
}
.defs { position: absolute; }
.serif { font-family: "Liberation Serif", serif; }
span { white-space: pre; flex: none; }
svg { flex: none; display: block; }

.menubar { display: flex; align-items: center; height: 48px; background: #2e2e2e; border-bottom: 2px solid #0a0a0a; font-size: 26px; line-height: 48px; }
.apple { width: 28px; height: 32px; margin: -4px 39px 0 39px; }
.menus { display: flex; gap: 41.300px; width: 1678px; }
.bold { font-weight: 700; }
.status { display: grid; flex: none; grid-template-columns: 36px 56px 71px 68px 67px 70px 72px 70px 80px 66px 44px 14px 72px 300px; align-items: center; justify-items: center; }
.off { font-size: 22px; justify-self: start; margin-left: 4px; }
.mic-dot { width: 10px; height: 10px; border-radius: 50%; background: #d0964a; margin-top: 4px; }
.clock { justify-self: start; margin-left: 10px; }

.ide { position: absolute; left: 0; top: 1600px; width: 2880px; height: 89px; box-sizing: border-box; display: flex; align-items: flex-end; padding: 0 20px 0 12px; background: #1b1c1e; border: 2px solid #4b4e50; border-radius: 0 0 24px 24px; outline: 2px solid #0b0b0c; font-size: 24px; line-height: 38px; color: #66686a; box-shadow: 0 8px 40px #0009; }
.ide-icon { margin: 0 23px 7px -2px; }
.ide-msg { color: #55575a; margin-right: auto !important; }
.lf { margin-left: 24px; }
.utf { margin-left: 24px; color: #393b3d; }
.spaces { margin-left: 25px; }
.lock-box { width: 16px; height: 14px; background: #6b6d6e; margin: 0 26px 8px 28px; }
.face { width: 28px; height: 28px; margin-bottom: 4px; }
.face + .face { margin-left: 20px; }

.window { position: absolute; left: 0; top: 50px; width: 2880px; height: 1614px; box-sizing: border-box; display: flex; flex-direction: column; border: 2px solid #bcbcbc; border-top-color: #dcc8cf; border-radius: 20px; overflow: hidden; background: #262626; box-shadow: 0 0 0 2px #080808; }
.tabstrip { display: flex; align-items: center; height: 82px; background: #5c1832; flex: none; }
.lights { display: flex; gap: 16px; width: 144px; padding-left: 40px; }
.lights i { width: 24px; height: 24px; border-radius: 50%; }
.red { background: #ed6a5e; } .yellow { background: #e0c04c; } .green { background: #72be47; }
.tabs { display: flex; align-self: stretch; }
.tab { position: relative; display: flex; align-items: center; width: 244px; height: 68px; margin-top: 14px; box-sizing: border-box; padding-left: 24px; font-size: 24px; line-height: 40px; }
.tab.wide { width: 246px; }
.fav { width: 32px; height: 32px; margin-right: 16px; }
.title { width: 120px; overflow: hidden; letter-spacing: -.35px; -webkit-mask-image: linear-gradient(90deg, #000 62%, transparent 99%); mask-image: linear-gradient(90deg, #000 62%, transparent 99%); }
.close { width: 16px; height: 16px; margin-left: 15px; }
.tab.line::after { content: ""; position: absolute; right: -1px; top: 15px; width: 2px; height: 40px; background: #8d5a6e; }
.tab.before { background: linear-gradient(#8d5a6e, #8d5a6e) no-repeat 0 15px / 2px 40px; }
.active { background: #92264d; border-radius: 16px 16px 0 0; }
.active::before, .active::after { content: ""; position: absolute; bottom: 0; width: 16px; height: 16px; }
.active::before { left: -16px; background: radial-gradient(circle at 0 0, transparent 15.500px, #92264d 16px); }
.active::after { right: -16px; background: radial-gradient(circle at 100% 0, transparent 15.500px, #92264d 16px); }
.active .title { width: 76px; }
.rec { width: 16px; height: 16px; margin-left: 14px; border-radius: 50%; background: #e69187; border: 2px solid #92264d; outline: 2px solid #e69187; }
.tab.active .close { margin-left: 25px; }
.plus { width: 24px; height: 24px; margin: 14px 0 0 34px; }
.chev { width: 18px; height: 12px; margin: 16px 0 0 135px; }

.toolbar { display: flex; align-items: center; height: 72px; background: #92264d; flex: none; }
.nav { width: 28px; height: 28px; margin-left: 28px; }
.nav + .nav { margin-left: 36px; }
.omnibox { display: flex; align-items: center; width: 2449px; height: 56px; margin-left: 30px; box-sizing: border-box; border: 2px solid #5b1835; border-radius: 28px; background: #712342; font-size: 28px; color: #c9a6b5; }
.url { margin-right: auto !important; }
.url b { font-weight: 400; color: #fff; }
.omnibox svg { margin-right: 40px; }
.omnibox .lock { width: 17px; height: 22px; margin: 0 24px 0 25px; }
.omnibox svg:last-child { margin-right: 20px; }
.puzzle { width: 30px; height: 28px; margin-left: 29px; }
.avatar { width: 44px; height: 44px; margin-left: 26px; border-radius: 50%; background: #729e48; font-size: 24px; line-height: 44px; text-align: center; }
.dots { width: 6px; height: 28px; margin-left: 39px; }

.bookmarks { display: flex; align-items: center; gap: 33.300px; height: 64px; box-sizing: content-box; padding: 0 27px 0 27px; background: linear-gradient(#92264d, #92264d); border-bottom: 2px solid #a85578; font-size: 24px; flex: none; }
.bookmarks > * { margin-bottom: 8px; }
.bm { display: flex; align-items: center; }
.more { width: 14px; height: 14px; margin: 0 -12px 8px auto; }
.bm-line { width: 2px; height: 32px; background: #b2708a; margin-right: -12px; }
.reading { width: 28px; height: 28px; margin-right: -15px; }

.session { position: relative; flex: 1; display: flex; flex-direction: column; align-items: center; }
.session-menu { position: absolute; left: -2px; top: 18px; width: 106px; height: 86px; box-sizing: border-box; display: flex; flex-direction: column; gap: 10px; padding: 27px 0 0 38px; border: 2px solid #cfcfcf; border-radius: 0 43px 43px 0; background: #060606; }
.session-menu i { width: 48px; height: 2px; background: #fff; }
.recording { position: absolute; left: 83px; top: 57px; width: 50px; height: 50px; display: flex; align-items: center; justify-content: center; border-radius: 50%; background: #262626; }
.tools { align-self: stretch; display: flex; align-items: center; gap: 44px; height: 48px; padding-left: 156px; margin-top: 88px; }
.tools svg { width: 48px; height: 48px; fill: none; stroke: #e2e2e2; stroke-width: 3.600; stroke-linejoin: round; }
.caret { border: 9px solid transparent; border-top-color: #bbb; border-bottom: 0; margin-left: -9px; }

.slide { width: 1307px; height: 1010px; margin: 36px 0 0 3px; box-sizing: border-box; padding: 15px 0; background: #fff; }
.frame { height: 980px; box-sizing: border-box; padding: 33.500px 25px; background: #ea5149; }
.paper { position: relative; height: 912px; box-sizing: border-box; padding: 38px 0 0 68px; background: #cd8e8c; box-shadow: inset 0 0 0 1px #d59a98; font-feature-settings: "cv11", "ss03"; color: #000; }
.paper::before { content: ""; position: absolute; left: 14px; right: 14px; top: 19px; bottom: 18px; border: 2px solid #83605f; }
h1 { margin: -3px 0 0; padding-left: 172px; font-size: 88px; line-height: 110px; font-weight: 300; -webkit-text-stroke: .8px #000; }
ul { list-style: none; margin: 13px 0 0; padding: 0 0 0 44px; font-size: 43px; line-height: 52.270px; font-weight: 300; }
li { position: relative; }
li::before { content: ""; position: absolute; left: -37px; top: 21px; width: 11px; height: 11px; border-radius: 50%; background: #000; }
.row { height: 52.270px; }
.row span, h1 span { display: inline-block; transform-origin: 0 50%; }

.pill { display: flex; gap: 20px; height: 66px; width: 410px; box-sizing: border-box; padding-left: 31px; margin: 24px 0 0 0; border-radius: 33px; background: #161616; font-family: "Open Sans", "Noto Sans", sans-serif; font-size: 24px; line-height: 66px; color: #f4f4f4; }
.controls { display: flex; gap: 20px; margin-top: 17px; margin-left: -10px; }
.controls svg { width: 86px; height: 86px; overflow: visible; }
.me { margin-right: 1.500px; }
.person { position: absolute; left: 2551px; top: 1272px; width: 191px; height: 107px; background: #383838; }
.person svg { width: 191px; height: 107px; }
.name { position: absolute; left: 0; bottom: 0; width: 188px; height: 36px; padding-left: 16px; box-sizing: border-box; background: #2a2a2aee; font: 600 24px/36px "Open Sans", "Noto Sans", sans-serif; }
.panel-btn { position: absolute; right: 0; top: 1290px; width: 104px; height: 86px; box-sizing: border-box; padding: 18px 0 0 29px; border-radius: 43px 0 0 43px; background: #b972d0; }
.panel-btn svg { width: 30px; height: 50px; overflow: visible; }

.dock { position: absolute; left: 57px; top: 1696px; width: 2766px; height: 94px; box-sizing: border-box; display: flex; align-items: center; padding-left: 5px; border: 2px solid #b4b4b4; border-radius: 27px; background: #0f0f0f; box-shadow: 0 0 0 2px #141414; }
.slot { position: relative; width: 76.670px; flex: none; height: 90px; display: flex; align-items: center; justify-content: center; padding-bottom: 6px; box-sizing: border-box; }
.slot > svg { width: 58px; height: 58px; overflow: visible; }
.slot > svg.big { width: 64px; height: 64px; }
.slot > svg.huge { width: 70px; height: 70px; }
.slot > svg.clip { overflow: hidden; border-radius: 13px; }
.run::after { content: ""; position: absolute; left: 34px; bottom: 2px; width: 8px; height: 8px; border-radius: 50%; background: #8f8f8f; }
.badge { position: absolute; right: 2px; top: 5px; width: 27px; height: 27px; border-radius: 50%; background: #e04a40; font-size: 17px; font-weight: 400; line-height: 27px; text-align: center; }
.rule { width: 2px; height: 70px; background: #3f3f3f; margin: 0 14px 2px 18px; flex: none; }
</style>
